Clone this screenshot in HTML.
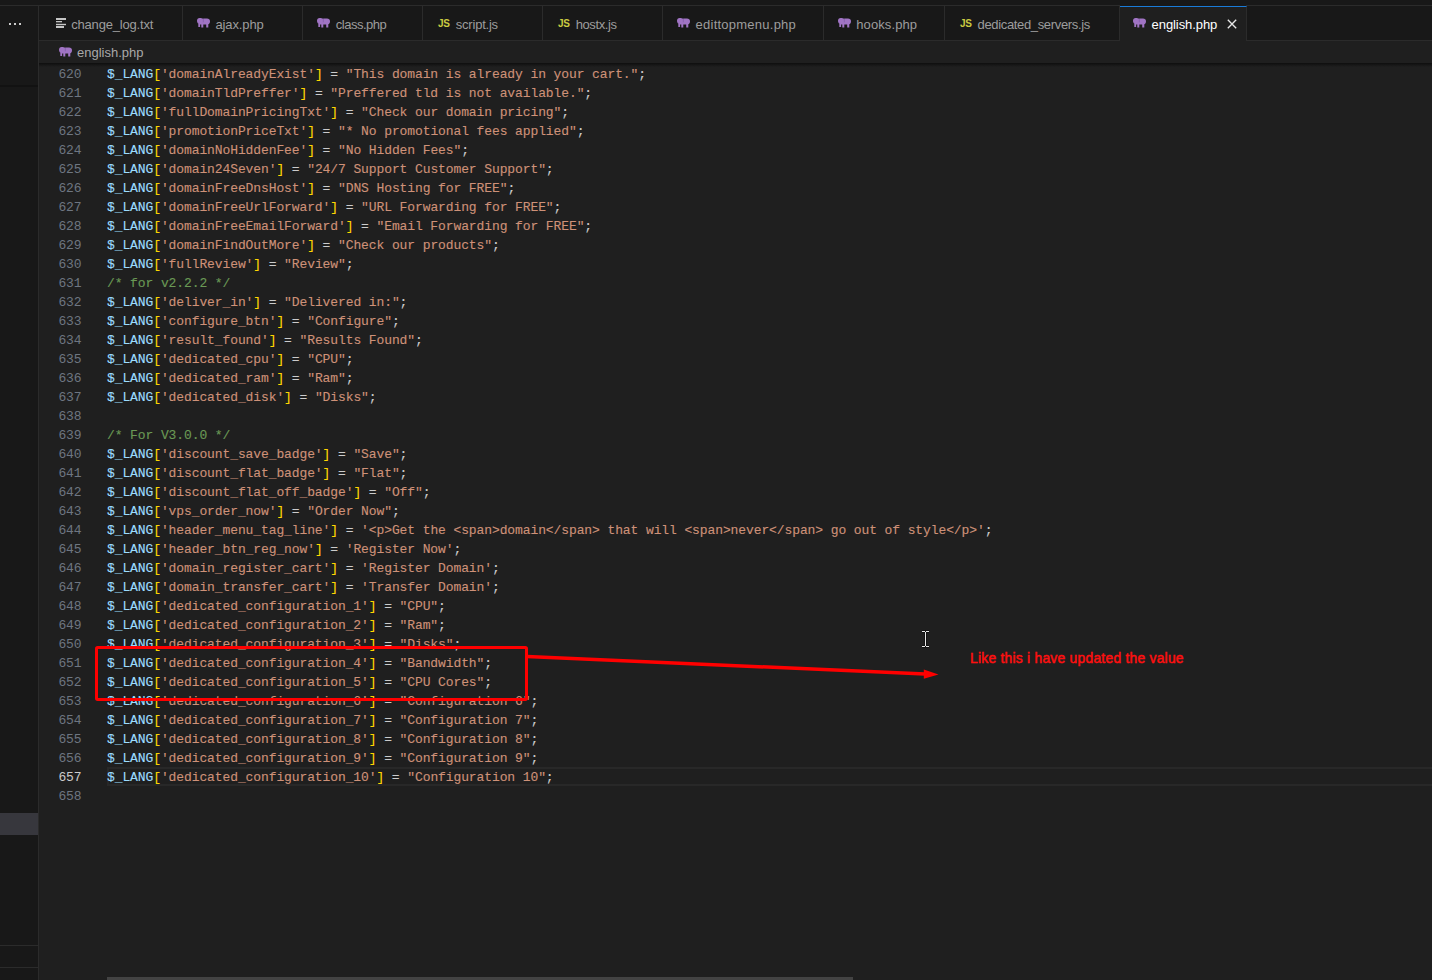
<!DOCTYPE html>
<html><head><meta charset="utf-8"><style>
*{margin:0;padding:0;box-sizing:border-box}
html,body{width:1432px;height:980px;overflow:hidden;background:#181818;position:relative;font-family:"Liberation Sans",sans-serif}
.abs{position:absolute}
#topline{position:absolute;left:0;top:5px;width:1432px;height:1px;background:#2b2b2b}
#side{position:absolute;left:0;top:6px;width:38px;height:974px;background:#181818}
#sideb{position:absolute;left:38px;top:6px;width:1px;height:974px;background:#2b2b2b}
.dot{position:absolute;top:23px;width:2px;height:2px;background:#cccccc}
#tabbar{position:absolute;left:39px;top:6px;width:1393px;height:35px;background:#181818;border-bottom:1px solid #2b2b2b}
.tab{position:absolute;top:6px;height:34px;border-right:1px solid #2b2b2b;background:#181818}
.ticon{position:absolute;line-height:0}
.tlab{position:absolute;top:17px;font-size:13px;line-height:16px;color:#9d9d9d;white-space:nowrap}
.js{font-family:"Liberation Sans",sans-serif;font-weight:bold;font-size:10px;line-height:10px;color:#cbcb41;letter-spacing:-0.3px;display:block}
#acttab{position:absolute;left:1120px;top:6px;width:127px;height:35px;background:#1f1f1f;border-top:1px solid #1a7bd8;border-right:1px solid #2b2b2b}
#bread{position:absolute;left:39px;top:41px;width:1393px;height:22px;background:#1f1f1f}
#editor{position:absolute;left:39px;top:63px;width:1393px;height:917px;background:#1f1f1f;overflow:hidden}
#nums{position:absolute;left:-0.5px;top:2px;width:43px;text-align:right;font-family:"Liberation Mono",monospace;font-size:13px;letter-spacing:-0.1px;line-height:19px;color:#6e7681}
#nums .act{color:#cccccc}
#code{position:absolute;left:68px;top:2px;-webkit-text-stroke-width:0.12px;white-space:pre;font-family:"Liberation Mono",monospace;font-size:13px;letter-spacing:-0.103px;line-height:19px;color:#cccccc}
.v{color:#9cdcfe} .b{color:#ffd700} .s{color:#ce9178} .c{color:#6a9955}
#curline{position:absolute;left:68px;top:704px;width:1325px;height:19px;border:2px solid #282828;border-right:none}
#shadow{position:absolute;left:0;top:0;width:1393px;height:4px;background:linear-gradient(#0e0e0e,rgba(0,0,0,0))}
#hscroll{position:absolute;left:68px;top:914px;width:746px;height:3px;background:#434343}
</style></head><body>
<div id="topline"></div>
<div id="side">
</div>
<div class="dot" style="left:9px"></div><div class="dot" style="left:14px"></div><div class="dot" style="left:19px"></div>
<div class="abs" style="left:0;top:85px;width:38px;height:2px;background:#121212"></div>
<div class="abs" style="left:0;top:813px;width:38px;height:22px;background:#37373d"></div>
<div class="abs" style="left:0;top:945px;width:38px;height:1px;background:#2b2b2b"></div>
<div class="abs" style="left:0;top:967px;width:38px;height:1px;background:#2b2b2b"></div>
<div id="sideb"></div>
<div id="tabbar"></div>
<div class="tab" style="left:39px;width:144px"></div><div class="ticon" style="left:56px;top:18px"><svg class="ico" width="11" height="11" viewBox="0 0 11 11"><g fill="#c5c5c5"><rect x="0" y="0" width="10" height="2"/><rect x="0" y="3" width="6" height="1.3"/><rect x="0" y="5.8" width="10" height="1.4"/><rect x="0" y="8" width="8" height="2"/></g></svg></div><div class="tlab" style="left:71.2px;letter-spacing:-0.18px">change_log.txt</div><div class="tab" style="left:183px;width:120px"></div><div class="ticon" style="left:196.8px;top:18px"><svg class="ico" width="13" height="10" viewBox="0 0 13 10"><path fill="#a074c4" d="M2.6 0C1 0 0 1.1 0 2.8C0 4.2 0.6 5.2 1.3 5.6L1.3 9L3.1 9L3.1 6.6L4.3 6.6L4.3 9.5L6.3 9.5L6.3 6.6L9.2 6.6L9.2 9.5L11.3 9.5L11.3 6.2C12.3 5.9 13 4.9 13 3.2C13 1.3 11.8 0.4 10 0.4L7.2 0.4C6.8 0.4 6.4 0.5 6.1 0.7C5.4 0.2 4.2 0 2.6 0Z"/><path d="M6.3 0.9V4.3" stroke="#7a55a0" stroke-width="0.6"/></svg></div><div class="tlab" style="left:215.4px;letter-spacing:-0.11px">ajax.php</div><div class="tab" style="left:303px;width:120px"></div><div class="ticon" style="left:316.5px;top:18px"><svg class="ico" width="13" height="10" viewBox="0 0 13 10"><path fill="#a074c4" d="M2.6 0C1 0 0 1.1 0 2.8C0 4.2 0.6 5.2 1.3 5.6L1.3 9L3.1 9L3.1 6.6L4.3 6.6L4.3 9.5L6.3 9.5L6.3 6.6L9.2 6.6L9.2 9.5L11.3 9.5L11.3 6.2C12.3 5.9 13 4.9 13 3.2C13 1.3 11.8 0.4 10 0.4L7.2 0.4C6.8 0.4 6.4 0.5 6.1 0.7C5.4 0.2 4.2 0 2.6 0Z"/><path d="M6.3 0.9V4.3" stroke="#7a55a0" stroke-width="0.6"/></svg></div><div class="tlab" style="left:335.7px;letter-spacing:-0.47px">class.php</div><div class="tab" style="left:423px;width:120px"></div><div class="ticon" style="left:438px;top:19px"><span class="js">JS</span></div><div class="tlab" style="left:455.8px;letter-spacing:-0.22px">script.js</div><div class="tab" style="left:543px;width:120px"></div><div class="ticon" style="left:558px;top:19px"><span class="js">JS</span></div><div class="tlab" style="left:575.7px;letter-spacing:-0.4px">hostx.js</div><div class="tab" style="left:663px;width:161px"></div><div class="ticon" style="left:676.8px;top:18px"><svg class="ico" width="13" height="10" viewBox="0 0 13 10"><path fill="#a074c4" d="M2.6 0C1 0 0 1.1 0 2.8C0 4.2 0.6 5.2 1.3 5.6L1.3 9L3.1 9L3.1 6.6L4.3 6.6L4.3 9.5L6.3 9.5L6.3 6.6L9.2 6.6L9.2 9.5L11.3 9.5L11.3 6.2C12.3 5.9 13 4.9 13 3.2C13 1.3 11.8 0.4 10 0.4L7.2 0.4C6.8 0.4 6.4 0.5 6.1 0.7C5.4 0.2 4.2 0 2.6 0Z"/><path d="M6.3 0.9V4.3" stroke="#7a55a0" stroke-width="0.6"/></svg></div><div class="tlab" style="left:695.6px;letter-spacing:0.24px">edittopmenu.php</div><div class="tab" style="left:824px;width:121px"></div><div class="ticon" style="left:837.7px;top:18px"><svg class="ico" width="13" height="10" viewBox="0 0 13 10"><path fill="#a074c4" d="M2.6 0C1 0 0 1.1 0 2.8C0 4.2 0.6 5.2 1.3 5.6L1.3 9L3.1 9L3.1 6.6L4.3 6.6L4.3 9.5L6.3 9.5L6.3 6.6L9.2 6.6L9.2 9.5L11.3 9.5L11.3 6.2C12.3 5.9 13 4.9 13 3.2C13 1.3 11.8 0.4 10 0.4L7.2 0.4C6.8 0.4 6.4 0.5 6.1 0.7C5.4 0.2 4.2 0 2.6 0Z"/><path d="M6.3 0.9V4.3" stroke="#7a55a0" stroke-width="0.6"/></svg></div><div class="tlab" style="left:856.3px;letter-spacing:0.09px">hooks.php</div><div class="tab" style="left:945px;width:175px"></div><div class="ticon" style="left:960px;top:19px"><span class="js">JS</span></div><div class="tlab" style="left:977.5px;letter-spacing:-0.34px">dedicated_servers.js</div>
<div id="acttab"></div><div class="abs" style="left:1120px;top:5px;width:126px;height:1px;background:#181818"></div>
<div class="ticon" style="left:1132.6px;top:18px"><svg class="ico" width="13" height="10" viewBox="0 0 13 10"><path fill="#a074c4" d="M2.6 0C1 0 0 1.1 0 2.8C0 4.2 0.6 5.2 1.3 5.6L1.3 9L3.1 9L3.1 6.6L4.3 6.6L4.3 9.5L6.3 9.5L6.3 6.6L9.2 6.6L9.2 9.5L11.3 9.5L11.3 6.2C12.3 5.9 13 4.9 13 3.2C13 1.3 11.8 0.4 10 0.4L7.2 0.4C6.8 0.4 6.4 0.5 6.1 0.7C5.4 0.2 4.2 0 2.6 0Z"/><path d="M6.3 0.9V4.3" stroke="#7a55a0" stroke-width="0.6"/></svg></div>
<div class="tlab" style="left:1151.6px;color:#ffffff;letter-spacing:-0.08px">english.php</div>
<svg class="abs" style="left:1227px;top:19px" width="10" height="10" viewBox="0 0 10 10"><path d="M0.8 0.8L9.2 9.2M9.2 0.8L0.8 9.2" stroke="#e8e8e8" stroke-width="1.35"/></svg>
<div id="bread"></div>
<div class="ticon" style="left:58.5px;top:47px"><svg class="ico" width="13" height="10" viewBox="0 0 13 10"><path fill="#a074c4" d="M2.6 0C1 0 0 1.1 0 2.8C0 4.2 0.6 5.2 1.3 5.6L1.3 9L3.1 9L3.1 6.6L4.3 6.6L4.3 9.5L6.3 9.5L6.3 6.6L9.2 6.6L9.2 9.5L11.3 9.5L11.3 6.2C12.3 5.9 13 4.9 13 3.2C13 1.3 11.8 0.4 10 0.4L7.2 0.4C6.8 0.4 6.4 0.5 6.1 0.7C5.4 0.2 4.2 0 2.6 0Z"/><path d="M6.3 0.9V4.3" stroke="#7a55a0" stroke-width="0.6"/></svg></div>
<div class="tlab" style="left:77px;top:45px;color:#a9a9a9">english.php</div>
<div id="editor">
<div id="curline"></div>
<div id="nums"><div>620</div><div>621</div><div>622</div><div>623</div><div>624</div><div>625</div><div>626</div><div>627</div><div>628</div><div>629</div><div>630</div><div>631</div><div>632</div><div>633</div><div>634</div><div>635</div><div>636</div><div>637</div><div>638</div><div>639</div><div>640</div><div>641</div><div>642</div><div>643</div><div>644</div><div>645</div><div>646</div><div>647</div><div>648</div><div>649</div><div>650</div><div>651</div><div>652</div><div>653</div><div>654</div><div>655</div><div>656</div><div class="act">657</div><div>658</div></div>
<div id="code"><div><span class="v">$_LANG</span><span class="b">[</span><span class="s">'domainAlreadyExist'</span><span class="b">]</span> = <span class="s">"This domain is already in your cart."</span>;</div><div><span class="v">$_LANG</span><span class="b">[</span><span class="s">'domainTldPreffer'</span><span class="b">]</span> = <span class="s">"Preffered tld is not available."</span>;</div><div><span class="v">$_LANG</span><span class="b">[</span><span class="s">'fullDomainPricingTxt'</span><span class="b">]</span> = <span class="s">"Check our domain pricing"</span>;</div><div><span class="v">$_LANG</span><span class="b">[</span><span class="s">'promotionPriceTxt'</span><span class="b">]</span> = <span class="s">"* No promotional fees applied"</span>;</div><div><span class="v">$_LANG</span><span class="b">[</span><span class="s">'domainNoHiddenFee'</span><span class="b">]</span> = <span class="s">"No Hidden Fees"</span>;</div><div><span class="v">$_LANG</span><span class="b">[</span><span class="s">'domain24Seven'</span><span class="b">]</span> = <span class="s">"24/7 Support Customer Support"</span>;</div><div><span class="v">$_LANG</span><span class="b">[</span><span class="s">'domainFreeDnsHost'</span><span class="b">]</span> = <span class="s">"DNS Hosting for FREE"</span>;</div><div><span class="v">$_LANG</span><span class="b">[</span><span class="s">'domainFreeUrlForward'</span><span class="b">]</span> = <span class="s">"URL Forwarding for FREE"</span>;</div><div><span class="v">$_LANG</span><span class="b">[</span><span class="s">'domainFreeEmailForward'</span><span class="b">]</span> = <span class="s">"Email Forwarding for FREE"</span>;</div><div><span class="v">$_LANG</span><span class="b">[</span><span class="s">'domainFindOutMore'</span><span class="b">]</span> = <span class="s">"Check our products"</span>;</div><div><span class="v">$_LANG</span><span class="b">[</span><span class="s">'fullReview'</span><span class="b">]</span> = <span class="s">"Review"</span>;</div><div><span class="c">/* for v2.2.2 */</span></div><div><span class="v">$_LANG</span><span class="b">[</span><span class="s">'deliver_in'</span><span class="b">]</span> = <span class="s">"Delivered in:"</span>;</div><div><span class="v">$_LANG</span><span class="b">[</span><span class="s">'configure_btn'</span><span class="b">]</span> = <span class="s">"Configure"</span>;</div><div><span class="v">$_LANG</span><span class="b">[</span><span class="s">'result_found'</span><span class="b">]</span> = <span class="s">"Results Found"</span>;</div><div><span class="v">$_LANG</span><span class="b">[</span><span class="s">'dedicated_cpu'</span><span class="b">]</span> = <span class="s">"CPU"</span>;</div><div><span class="v">$_LANG</span><span class="b">[</span><span class="s">'dedicated_ram'</span><span class="b">]</span> = <span class="s">"Ram"</span>;</div><div><span class="v">$_LANG</span><span class="b">[</span><span class="s">'dedicated_disk'</span><span class="b">]</span> = <span class="s">"Disks"</span>;</div><div>&nbsp;</div><div><span class="c">/* For V3.0.0 */</span></div><div><span class="v">$_LANG</span><span class="b">[</span><span class="s">'discount_save_badge'</span><span class="b">]</span> = <span class="s">"Save"</span>;</div><div><span class="v">$_LANG</span><span class="b">[</span><span class="s">'discount_flat_badge'</span><span class="b">]</span> = <span class="s">"Flat"</span>;</div><div><span class="v">$_LANG</span><span class="b">[</span><span class="s">'discount_flat_off_badge'</span><span class="b">]</span> = <span class="s">"Off"</span>;</div><div><span class="v">$_LANG</span><span class="b">[</span><span class="s">'vps_order_now'</span><span class="b">]</span> = <span class="s">"Order Now"</span>;</div><div><span class="v">$_LANG</span><span class="b">[</span><span class="s">'header_menu_tag_line'</span><span class="b">]</span> = <span class="s">'&lt;p&gt;Get the &lt;span&gt;domain&lt;/span&gt; that will &lt;span&gt;never&lt;/span&gt; go out of style&lt;/p&gt;'</span>;</div><div><span class="v">$_LANG</span><span class="b">[</span><span class="s">'header_btn_reg_now'</span><span class="b">]</span> = <span class="s">'Register Now'</span>;</div><div><span class="v">$_LANG</span><span class="b">[</span><span class="s">'domain_register_cart'</span><span class="b">]</span> = <span class="s">'Register Domain'</span>;</div><div><span class="v">$_LANG</span><span class="b">[</span><span class="s">'domain_transfer_cart'</span><span class="b">]</span> = <span class="s">'Transfer Domain'</span>;</div><div><span class="v">$_LANG</span><span class="b">[</span><span class="s">'dedicated_configuration_1'</span><span class="b">]</span> = <span class="s">"CPU"</span>;</div><div><span class="v">$_LANG</span><span class="b">[</span><span class="s">'dedicated_configuration_2'</span><span class="b">]</span> = <span class="s">"Ram"</span>;</div><div><span class="v">$_LANG</span><span class="b">[</span><span class="s">'dedicated_configuration_3'</span><span class="b">]</span> = <span class="s">"Disks"</span>;</div><div><span class="v">$_LANG</span><span class="b">[</span><span class="s">'dedicated_configuration_4'</span><span class="b">]</span> = <span class="s">"Bandwidth"</span>;</div><div><span class="v">$_LANG</span><span class="b">[</span><span class="s">'dedicated_configuration_5'</span><span class="b">]</span> = <span class="s">"CPU Cores"</span>;</div><div><span class="v">$_LANG</span><span class="b">[</span><span class="s">'dedicated_configuration_6'</span><span class="b">]</span> = <span class="s">"Configuration 6"</span>;</div><div><span class="v">$_LANG</span><span class="b">[</span><span class="s">'dedicated_configuration_7'</span><span class="b">]</span> = <span class="s">"Configuration 7"</span>;</div><div><span class="v">$_LANG</span><span class="b">[</span><span class="s">'dedicated_configuration_8'</span><span class="b">]</span> = <span class="s">"Configuration 8"</span>;</div><div><span class="v">$_LANG</span><span class="b">[</span><span class="s">'dedicated_configuration_9'</span><span class="b">]</span> = <span class="s">"Configuration 9"</span>;</div><div><span class="v">$_LANG</span><span class="b">[</span><span class="s">'dedicated_configuration_10'</span><span class="b">]</span> = <span class="s">"Configuration 10"</span>;</div><div>&nbsp;</div></div>
<div id="shadow"></div>
<div id="hscroll"></div>
</div>
<svg class="abs" style="left:0;top:0" width="1432" height="980" viewBox="0 0 1432 980">
<rect x="96.5" y="647.5" width="430" height="52" rx="1.2" fill="none" stroke="#ff0000" stroke-width="3"/>
<path d="M527 656.5L925 674" stroke="#ff0000" stroke-width="3.5"/>
<path d="M938.5 674.6L923.8 669.4L923.8 678.8Z" fill="#ff0000"/>
<g stroke="#000" stroke-width="3" fill="none" opacity="0.45"><path d="M922 631.5H929M925.5 632V646M922 646.5H929"/></g>
<g stroke="#e6e6e6" stroke-width="1" fill="none"><path d="M922 631.5H925M926 631.5H929M925.5 632V646M922 646.5H925M926 646.5H929"/></g>
</svg>
<div class="abs" style="left:969.5px;top:649px;font-size:15px;line-height:17px;letter-spacing:0.25px;transform:scaleX(0.925);transform-origin:0 0;-webkit-text-stroke:0.5px #ff1010;color:#ff1010;white-space:nowrap">Like this i have updated the value</div>
</body></html>
